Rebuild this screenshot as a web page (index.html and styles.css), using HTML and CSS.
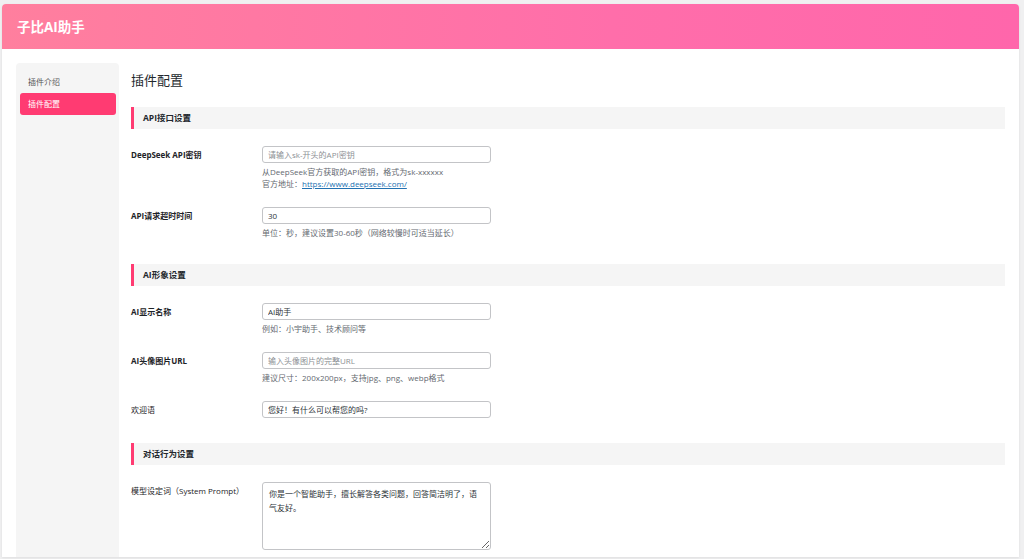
FILE: index.html
```html
<!DOCTYPE html>
<html lang="zh-CN">
<head>
  <meta charset="UTF-8">
  <meta name="viewport" content="width=device-width, initial-scale=1.0">
  <title>子比AI助手 - 插件配置</title>
  <link rel="stylesheet" href="styles.css">
</head>
<body>
  <div class="wrap">
    <div class="top-bar">
      <h1 class="top-title">子比AI助手</h1>
    </div>

    <div class="layout">
      <div class="side-nav">
        <a class="nav-item" href="#">插件介绍</a>
        <a class="nav-item active" href="#">插件配置</a>
      </div>

      <div class="main">
        <h2 class="page-title">插件配置</h2>

        <div class="section">
          <h3 class="section-title">API接口设置</h3>
          <div class="row">
            <label class="row-label bold">DeepSeek API密钥</label>
            <div class="row-field">
              <input class="text-input" type="text" placeholder="请输入sk-开头的API密钥">
              <p class="desc">从DeepSeek官方获取的API密钥，格式为sk-xxxxxx<br>官方地址：<a href="#">https://www.deepseek.com/</a></p>
            </div>
          </div>
          <div class="row">
            <label class="row-label bold">API请求超时时间</label>
            <div class="row-field">
              <input class="text-input" type="text" value="30">
              <p class="desc">单位：秒，建议设置30-60秒（网络较慢时可适当延长）</p>
            </div>
          </div>
        </div>

        <div class="section">
          <h3 class="section-title">AI形象设置</h3>
          <div class="row">
            <label class="row-label bold">AI显示名称</label>
            <div class="row-field">
              <input class="text-input" type="text" value="AI助手">
              <p class="desc">例如：小宇助手、技术顾问等</p>
            </div>
          </div>
          <div class="row">
            <label class="row-label bold">AI头像图片URL</label>
            <div class="row-field">
              <input class="text-input" type="text" placeholder="输入头像图片的完整URL">
              <p class="desc">建议尺寸：200x200px，支持jpg、png、webp格式</p>
            </div>
          </div>
          <div class="row">
            <label class="row-label">欢迎语</label>
            <div class="row-field">
              <input class="text-input" type="text" value="您好！有什么可以帮您的吗?">
            </div>
          </div>
        </div>

        <div class="section">
          <h3 class="section-title">对话行为设置</h3>
          <div class="row">
            <label class="row-label">模型设定词（System Prompt）</label>
            <div class="row-field">
              <textarea class="text-area">你是一个智能助手，擅长解答各类问题，回答简洁明了，语气友好。</textarea>
            </div>
          </div>
        </div>
      </div>
    </div>
  </div>
</body>
</html>
```

FILE: styles.css
```css
:root {
  --pink: #ff3b72;
  --text-color: #1d2327;
  --muted: #646970;
}

body {
  margin: 0;
  padding: 4px 5px 0 2px;
  background: #f0f0f1;
  font-family: "Open Sans", "Noto Sans CJK SC", sans-serif;
  color: var(--text-color);
  height: 559px;
  box-sizing: border-box;
  overflow: hidden;
}

.wrap {
  height: 553px;
  background: #fff;
  border-radius: 4px 4px 0 0;
  box-shadow: 0 1px 3px rgba(0, 0, 0, 0.08);
  overflow: hidden;
  display: flex;
  flex-direction: column;
}

.top-bar {
  height: 45px;
  flex-shrink: 0;
  background: linear-gradient(90deg, #ff7f9e 0%, #ff6eaa 60%, #ff66ab 100%);
  display: flex;
  align-items: center;
  padding-left: 15px;
}

.top-title {
  margin: 0;
  color: #fff;
  font-size: 13.5px;
  font-weight: 700;
  line-height: 18px;
}

.layout {
  flex: 1;
  display: flex;
  padding: 14px 0 0 14px;
  min-height: 0;
}

.side-nav {
  width: 103px;
  flex-shrink: 0;
  background: #f5f5f5;
  border-radius: 4px 4px 0 0;
  padding: 8px 3px 0 4px;
  box-sizing: border-box;
  display: flex;
  flex-direction: column;
}

.nav-item {
  display: block;
  height: 22px;
  line-height: 22px;
  padding-left: 8px;
  font-size: 8px;
  color: #555;
  text-decoration: none;
  border-radius: 3px;
}

.nav-item.active {
  background: var(--pink);
  color: #fff;
}

.main {
  flex: 1;
  padding: 8px 14px 0 12px;
  min-width: 0;
}

.page-title {
  margin: 0 0 18px;
  font-size: 13px;
  font-weight: 400;
  line-height: 18px;
  color: #23282d;
}

.section {
  padding-bottom: 8px;
}

.section-title {
  margin: 0 0 17px;
  height: 22px;
  line-height: 22px;
  background: #f5f5f5;
  border-left: 3px solid var(--pink);
  padding-left: 9px;
  font-size: 8.5px;
  font-weight: 700;
  color: #23282d;
}

.row {
  display: flex;
  margin-bottom: 17px;
}

.row-label {
  width: 131px;
  flex-shrink: 0;
  font-size: 8px;
  line-height: 17px;
  color: var(--text-color);
}

.row-label.bold {
  font-weight: 700;
}

.row-field {
  width: 229px;
}

.text-input,
.text-area {
  display: block;
  width: 229px;
  box-sizing: border-box;
  border: 1px solid #c3c4c7;
  border-radius: 3px;
  background: #fff;
  font-family: inherit;
  font-size: 8px;
  color: #2c3338;
  margin: 0;
}

.text-input {
  height: 17px;
  padding: 0 5px;
}

.text-input::placeholder {
  color: #8c8f94;
}

.text-area {
  height: 68px;
  padding: 4px 6px;
  line-height: 14px;
  resize: vertical;
}

.desc {
  margin: 3px 0 0;
  font-size: 8px;
  line-height: 12px;
  color: var(--muted);
}

.desc a {
  color: #2271b1;
}
```
